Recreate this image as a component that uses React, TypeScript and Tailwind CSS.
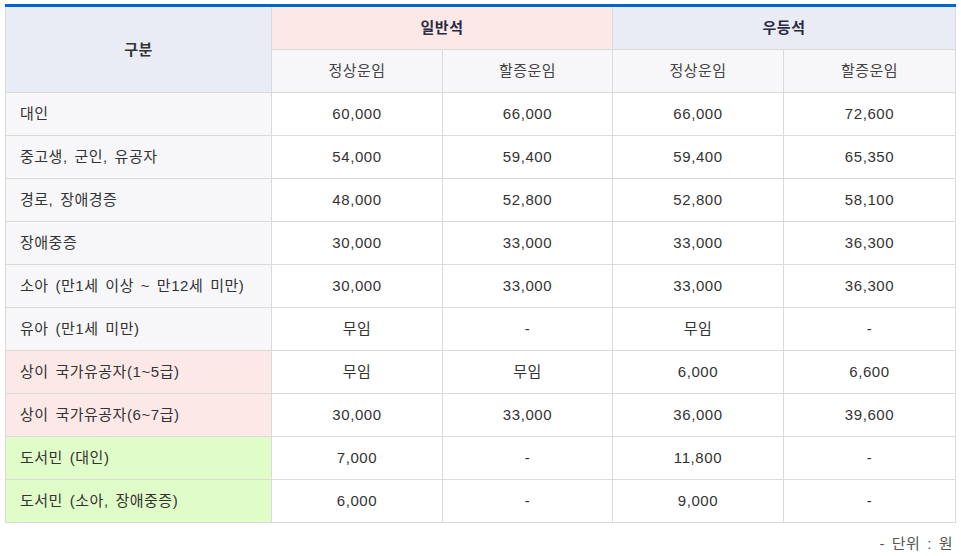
import React from "react";

type Row = { label: string; v: string[]; bg: string };

const rows: Row[] = [
  { label: "대인", v: ["60,000", "66,000", "66,000", "72,600"], bg: "bg-[#f7f7f9]" },
  { label: "중고생, 군인, 유공자", v: ["54,000", "59,400", "59,400", "65,350"], bg: "bg-[#f7f7f9]" },
  { label: "경로, 장애경증", v: ["48,000", "52,800", "52,800", "58,100"], bg: "bg-[#f7f7f9]" },
  { label: "장애중증", v: ["30,000", "33,000", "33,000", "36,300"], bg: "bg-[#f7f7f9]" },
  { label: "소아 (만1세 이상 ~ 만12세 미만)", v: ["30,000", "33,000", "33,000", "36,300"], bg: "bg-[#f7f7f9]" },
  { label: "유아 (만1세 미만)", v: ["무임", "-", "무임", "-"], bg: "bg-[#f7f7f9]" },
  { label: "상이 국가유공자(1~5급)", v: ["무임", "무임", "6,000", "6,600"], bg: "bg-[#fde8e8]" },
  { label: "상이 국가유공자(6~7급)", v: ["30,000", "33,000", "36,000", "39,600"], bg: "bg-[#fde8e8]" },
  { label: "도서민 (대인)", v: ["7,000", "-", "11,800", "-"], bg: "bg-[#e0fcc8]" },
  { label: "도서민 (소아, 장애중증)", v: ["6,000", "-", "9,000", "-"], bg: "bg-[#e0fcc8]" },
];

function K({ text }: { text: string }) {
  const parts = text.split(/([\uAC00-\uD7A3]+)/);
  return (
    <>
      {parts.map((p, i) =>
        /[\uAC00-\uD7A3]/.test(p) ? (
          <span key={i} className="text-[15px] tracking-[0.5px]">
            {p}
          </span>
        ) : (
          <React.Fragment key={i}>{p}</React.Fragment>
        )
      )}
    </>
  );
}

export default function App() {
  return (
    <div
      className="w-[961px] h-[556px] bg-white pt-[4px] pl-[5px] text-[15px] leading-[20px] tracking-[0.6px] [word-spacing:2px] text-[#333]"
      style={{ fontFamily: '"Liberation Sans", "Noto Sans CJK KR", sans-serif' }}
    >
      <table className="w-[950px] table-fixed border-collapse border-t-[3px] border-t-[#0066cc]">
        <colgroup>
          <col className="w-[266px]" />
          <col className="w-[171px]" />
          <col className="w-[170px]" />
          <col className="w-[171px]" />
          <col className="w-[172px]" />
        </colgroup>
        <thead>
          <tr className="h-[44px]">
            <th
              rowSpan={2}
              className="border border-[#dadada] border-t-0 bg-[#e9ecf5] font-bold text-[#333] text-center"
            >
              <K text="구분" />
            </th>
            <th
              colSpan={2}
              className="border border-[#dadada] border-t-0 bg-[#fde8e8] font-bold text-[#2b2b44] text-center"
            >
              <K text="일반석" />
            </th>
            <th
              colSpan={2}
              className="border border-[#dadada] border-t-0 bg-[#e9ecf5] font-bold text-[#2b2b44] text-center"
            >
              <K text="우등석" />
            </th>
          </tr>
          <tr className="h-[43px]">
            {["정상운임", "할증운임", "정상운임", "할증운임"].map((t, i) => (
              <th key={i} className="border border-[#dadada] bg-[#f7f7f9] font-normal text-[#444] text-center">
                <K text={t} />
              </th>
            ))}
          </tr>
        </thead>
        <tbody>
          {rows.map((r, i) => (
            <tr key={i} className="h-[43px]">
              <td className={`border border-[#dadada] ${r.bg} pl-[14px] text-left`}>
                <K text={r.label} />
              </td>
              {r.v.map((v, j) => (
                <td key={j} className="border border-[#dadada] bg-white text-center text-[#333]">
                  <K text={v} />
                </td>
              ))}
            </tr>
          ))}
        </tbody>
      </table>
      <div className="w-[950px] text-right mt-[11px] text-[#555] pr-[2px]">
        <K text="- 단위 : 원" />
      </div>
    </div>
  );
}
